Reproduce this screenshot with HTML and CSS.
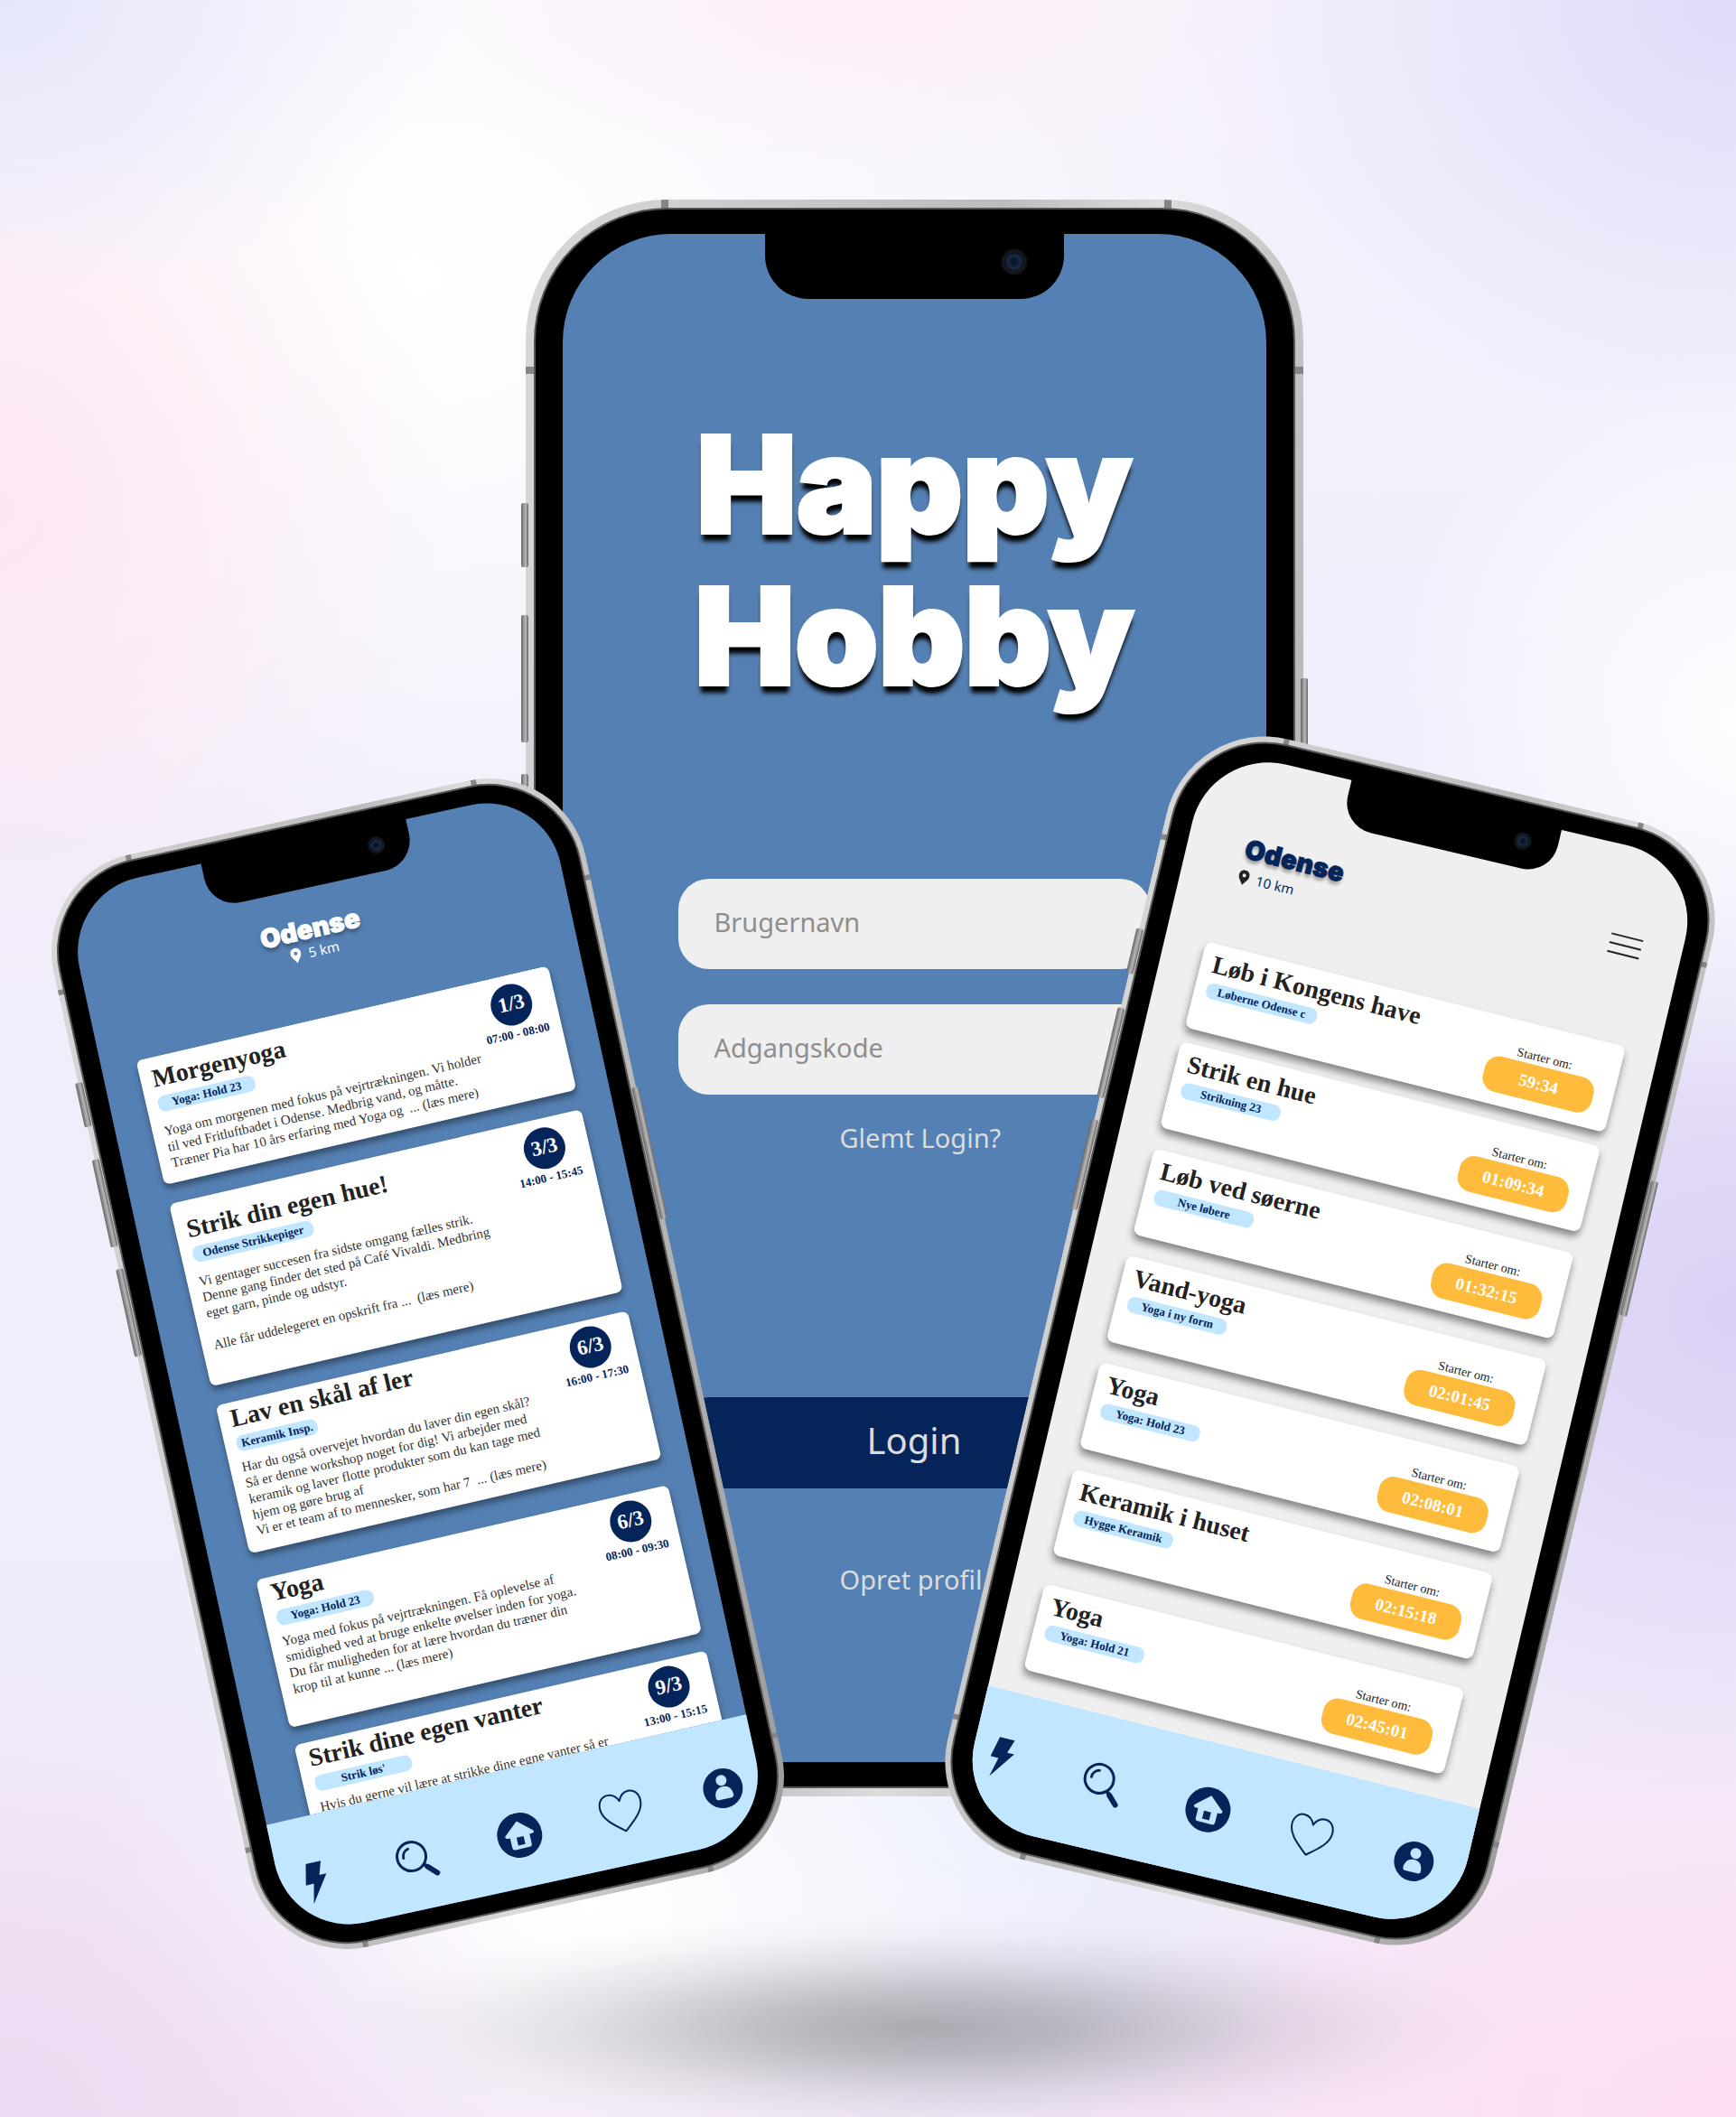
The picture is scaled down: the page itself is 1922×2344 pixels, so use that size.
FILE: index.html
```html
<!DOCTYPE html>
<html lang="da">
<head>
<meta charset="utf-8">
<meta name="viewport" content="width=device-width, initial-scale=1">
<title>Happy Hobby</title>
<link rel="stylesheet" href="styles.css">
</head>
<body>
<svg class="sprite" aria-hidden="true">
  <symbol id="bolt" viewBox="0 0 50 50"><path d="M18 3h17l-5 15h8L17 48l5-22h-9z" fill="currentColor"/></symbol>
  <symbol id="search" viewBox="0 0 50 50"><circle cx="18" cy="21" r="16" fill="none" stroke="currentColor" stroke-width="3"/><path d="M9 21a9 9 0 0 1 7-9" fill="none" stroke="currentColor" stroke-width="3" stroke-linecap="round"/><path d="m29 32 4 4" stroke="currentColor" stroke-width="4"/><path d="m33 36 9 9" stroke="currentColor" stroke-width="6" stroke-linecap="round"/></symbol>
  <symbol id="home" viewBox="0 0 50 50"><circle cx="25" cy="25" r="25" fill="currentColor"/><path d="M25 9 9 23q-1 3 3 3h2v11q0 3 3 3h16q3 0 3-3V26h2q4 0 3-3z" fill="#c1e6ff"/><path d="M21 27h8v9h-8z" fill="currentColor"/></symbol>
  <symbol id="heart" viewBox="0 0 50 50"><path d="M25 47C14 38 2 29 2 17 2 9 7 4 13 4c6 0 10 4 12 9 2-5 6-9 12-9 6 0 11 5 11 13 0 12-12 21-23 30z" fill="none" stroke="currentColor" stroke-width="2" stroke-linejoin="round"/></symbol>
  <symbol id="user" viewBox="0 0 50 50"><circle cx="25" cy="25" r="22" fill="currentColor"/><circle cx="25" cy="16" r="6" fill="#c1e6ff"/><path d="M15 34c0-7 4-11 10-11s10 4 10 11q0 3-3 3H18q-3 0-3-3z" fill="#c1e6ff"/></symbol>
  <symbol id="pin" viewBox="0 0 12 17"><path d="M6 0a6 6 0 0 0-6 6c0 4 4 7 6 11 2-4 6-7 6-11a6 6 0 0 0-6-6zm0 4a2 2 0 1 1 0 4 2 2 0 0 1 0-4z" fill="currentColor" fill-rule="evenodd"/></symbol>
</svg>

<main class="mockup">
  <div class="floor"></div>

  <section class="phone phone-main" aria-label="Login">
    <i class="key key-1"></i><i class="key key-2"></i><i class="key key-3"></i><i class="key key-power"></i>
    <div class="frame"><div class="bezel"><div class="screen">
      <form class="login">
        <h1 class="brand">Happy<br>Hobby</h1>
        <input class="field" type="text" placeholder="Brugernavn" aria-label="Brugernavn">
        <input class="field" type="password" placeholder="Adgangskode" aria-label="Adgangskode">
        <a class="link" href="#glemt">Glemt Login?</a>
        <button class="submit" type="button">Login</button>
        <a class="link" href="#opret">Opret profil</a>
      </form>
    </div></div></div>
    <div class="notch"><i class="camera"></i></div>
  </section>

  <section class="phone phone-left" aria-label="Aktiviteter">
    <i class="key key-1"></i><i class="key key-2"></i><i class="key key-3"></i><i class="key key-power"></i>
    <div class="frame"><div class="bezel"><div class="screen">
      <div class="view">
        <header class="place">
          <h2 class="city">Odense</h2>
          <p class="distance"><svg class="pin"><use href="#pin"/></svg>5 km</p>
        </header>
        <div class="events">
          <article class="event event-mid">
            <div><h3 class="title">Morgenyoga</h3><span class="tag">Yoga: Hold 23</span>
            <p class="text">Yoga om morgenen med fokus på vejrtrækningen. Vi holder<br>til ved Fritluftbadet i Odense. Medbrig vand, og måtte.<br>Træner Pia har 10 års erfaring med Yoga og &nbsp;... (læs mere)</p></div>
            <div class="when"><b class="date">1/3</b><span>07:00 - 08:00</span></div>
          </article>
          <article class="event event-tall">
            <div><h3 class="title">Strik din egen hue!</h3><span class="tag">Odense Strikkepiger</span>
            <p class="text">Vi gentager succesen fra sidste omgang fælles strik.<br>Denne gang finder det sted på Café Vivaldi. Medbring<br>eget garn, pinde og udstyr.<br><br>Alle får uddelegeret en opskrift fra ... &nbsp;(læs mere)</p></div>
            <div class="when"><b class="date">3/3</b><span>14:00 - 15:45</span></div>
          </article>
          <article class="event">
            <div><h3 class="title">Lav en skål af ler</h3><span class="tag tag-short">Keramik Insp.</span>
            <p class="text">Har du også overvejet hvordan du laver din egen skål?<br>Så er denne workshop noget for dig! Vi arbejder med<br>keramik og laver flotte produkter som du kan tage med<br>hjem og gøre brug af<br>Vi er et team af to mennesker, som har 7 &nbsp;... (læs mere)</p></div>
            <div class="when"><b class="date">6/3</b><span>16:00 - 17:30</span></div>
          </article>
          <article class="event event-spaced">
            <div><h3 class="title">Yoga</h3><span class="tag">Yoga: Hold 23</span>
            <p class="text">Yoga med fokus på vejrtrækningen. Få oplevelse af<br>smidighed ved at bruge enkelte øvelser inden for yoga.<br>Du får muligheden for at lære hvordan du træner din<br>krop til at kunne ... (læs mere)</p></div>
            <div class="when"><b class="date">6/3</b><span>08:00 - 09:30</span></div>
          </article>
          <article class="event">
            <div><h3 class="title">Strik dine egen vanter</h3><span class="tag">Strik løs'</span>
            <p class="text">Hvis du gerne vil lære at strikke dine egne vanter så er</p></div>
            <div class="when"><b class="date">9/3</b><span>13:00 - 15:15</span></div>
          </article>
        </div>
        <nav class="tabs" aria-label="Menu">
          <button type="button" aria-label="Nu"><svg><use href="#bolt"/></svg></button>
          <button type="button" aria-label="Søg"><svg><use href="#search"/></svg></button>
          <button type="button" aria-label="Hjem"><svg><use href="#home"/></svg></button>
          <button type="button" aria-label="Favoritter"><svg><use href="#heart"/></svg></button>
          <button type="button" aria-label="Profil"><svg><use href="#user"/></svg></button>
        </nav>
      </div>
    </div></div></div>
    <div class="notch"><i class="camera"></i></div>
  </section>

  <section class="phone phone-right" aria-label="Starter snart">
    <i class="key key-1"></i><i class="key key-2"></i><i class="key key-3"></i><i class="key key-power"></i>
    <div class="frame"><div class="bezel"><div class="screen">
      <div class="view">
        <header class="topbar">
          <div>
            <h2 class="city">Odense</h2>
            <p class="distance"><svg class="pin"><use href="#pin"/></svg>10 km</p>
          </div>
          <button class="burger" type="button" aria-label="Åbn menu"><i></i><i></i><i></i></button>
        </header>
        <div class="soon">
          <article class="slot slot-first"><div><h3 class="title">Løb i Kongens have</h3><span class="tag tag-long">Løberne Odense c</span></div><div class="start"><span>Starter om:</span><b class="timer">59:34</b></div></article>
          <article class="slot"><div><h3 class="title">Strik en hue</h3><span class="tag">Strikning 23</span></div><div class="start"><span>Starter om:</span><b class="timer">01:09:34</b></div></article>
          <article class="slot"><div><h3 class="title">Løb ved søerne</h3><span class="tag">Nye løbere</span></div><div class="start"><span>Starter om:</span><b class="timer">01:32:15</b></div></article>
          <article class="slot"><div><h3 class="title">Vand-yoga</h3><span class="tag">Yoga i ny form</span></div><div class="start"><span>Starter om:</span><b class="timer">02:01:45</b></div></article>
          <article class="slot"><div><h3 class="title">Yoga</h3><span class="tag">Yoga: Hold 23</span></div><div class="start"><span>Starter om:</span><b class="timer">02:08:01</b></div></article>
          <article class="slot slot-spaced"><div><h3 class="title">Keramik i huset</h3><span class="tag">Hygge Keramik</span></div><div class="start"><span>Starter om:</span><b class="timer">02:15:18</b></div></article>
          <article class="slot"><div><h3 class="title">Yoga</h3><span class="tag">Yoga: Hold 21</span></div><div class="start"><span>Starter om:</span><b class="timer">02:45:01</b></div></article>
        </div>
        <nav class="tabs" aria-label="Menu">
          <button type="button" aria-label="Nu"><svg><use href="#bolt"/></svg></button>
          <button type="button" aria-label="Søg"><svg><use href="#search"/></svg></button>
          <button type="button" aria-label="Hjem"><svg><use href="#home"/></svg></button>
          <button type="button" aria-label="Favoritter"><svg><use href="#heart"/></svg></button>
          <button type="button" aria-label="Profil"><svg><use href="#user"/></svg></button>
        </nav>
      </div>
    </div></div></div>
    <div class="notch"><i class="camera"></i></div>
  </section>
</main>
</body>
</html>
```
FILE: styles.css
```css
* { box-sizing: border-box; }

:root {
  --blue: #5580b3;
  --navy: #04245a;
  --sky: #c1e6ff;
  --grey: #efefef;
  --orange: #ffbb3b;
  --sans: "Noto Sans", "Open Sans", sans-serif;
  --serif: "Liberation Serif", serif;
  --heavy: Inter, "Open Sans", sans-serif;
}

body { margin: 0; font-family: var(--sans); }
h1, h2, h3, p { margin: 0; }
button { border: 0; padding: 0; background: none; font: inherit; color: inherit; }
.sprite { position: absolute; width: 0; height: 0; }

.mockup {
  position: relative;
  display: grid;
  justify-content: center;
  padding: 221px 0 355px 102px;
  overflow: hidden;
  background:
    radial-gradient(ellipse 26% 14% at 0% 0%, #e4e6fa, transparent),
    radial-gradient(ellipse 30% 20% at 100% 0%, #dfdbf9, transparent),
    radial-gradient(ellipse 24% 8% at 50% 0%, #fdeef7, transparent),
    radial-gradient(ellipse 26% 26% at 0% 24%, #fde7f3, transparent),
    radial-gradient(ellipse 20% 18% at 100% 34%, #fdfdff, transparent),
    radial-gradient(ellipse 34% 24% at 100% 62%, #dccff5, transparent),
    radial-gradient(ellipse 42% 22% at 100% 100%, #fddff1, transparent),
    radial-gradient(ellipse 30% 22% at 0% 100%, #ecd9f2, transparent),
    radial-gradient(ellipse 30% 14% at 34% 90%, #fff, transparent),
    radial-gradient(ellipse 30% 16% at 58% 86%, #eaeffc, transparent),
    radial-gradient(ellipse 50% 30% at 24% 13%, #fff, transparent),
    linear-gradient(#f6f1fb, #f0eefb 40%, #f2ecfa 85%, #f3e6f6);
}

/* soft shadow under the floating devices */
.floor {
  position: absolute;
  left: calc(50% - 590px);
  bottom: -25px;
  width: 1300px;
  height: 248px;
  background: radial-gradient(closest-side, rgba(106, 105, 110, .52), rgba(120, 120, 126, .44) 26%, rgba(130, 130, 138, .18) 60%, rgba(140, 140, 146, .05) 82%, transparent);
}

/* device shell */
.phone { position: relative; width: var(--w); height: var(--h); }
.frame {
  height: 100%;
  padding: var(--rim);
  border-radius: var(--r-frame);
  background:
    linear-gradient(#858585, #858585) var(--mark-x) 0 / var(--mark) 100% no-repeat,
    linear-gradient(#858585, #858585) calc(100% - var(--mark-x) + 4px) 0 / var(--mark) 100% no-repeat,
    linear-gradient(#858585, #858585) 0 var(--mark-y) / 100% var(--mark) no-repeat,
    linear-gradient(#858585, #858585) 0 calc(100% - var(--mark-y)) / 100% var(--mark) no-repeat,
    linear-gradient(100deg, #d8d8d8, #bcbcbc 45%, #dcdcdc 60%, #9a9a9a);
}
.bezel {
  height: 100%;
  padding: var(--pad);
  border: 2px solid #555;
  border-radius: var(--r-bezel);
  background: #000;
}
.screen {
  display: grid;
  height: 100%;
  overflow: hidden;
  border-radius: var(--r-screen);
  background: var(--blue);
}
.notch {
  position: absolute;
  top: var(--notch-top);
  left: var(--notch-x);
  width: var(--notch-w);
  height: var(--notch-h);
  border-radius: 0 0 var(--notch-r) var(--notch-r);
  background: #000;
}
.camera {
  position: absolute;
  top: 24%;
  right: 12%;
  width: var(--cam);
  height: var(--cam);
  border-radius: 50%;
  background: radial-gradient(circle, #0c1626 16%, #1a2d4c 34%, #10151e 46%, #16191e 58%, #050505 72%);
}
.key {
  position: absolute;
  left: var(--key-out);
  width: 8px;
  border-radius: 2px;
  background: linear-gradient(90deg, #666, #b8b8b8 60%, #666);
}
.key-1 { top: 19%; height: 4%; }
.key-2 { top: 26%; height: 8%; }
.key-3 { top: 36%; height: 8%; }
.key-power { left: auto; right: var(--key-out); top: 30%; height: 12%; }

.phone-main {
  --w: 861px; --h: 1768px; --rim: 9px; --pad: 27px 30px;
  --r-frame: 156px; --r-bezel: 148px; --r-screen: 120px;
  --mark: 8px; --mark-x: 150px; --mark-y: 185px; --key-out: -5px;
  --notch-top: 36px; --notch-x: 265px; --notch-w: 331px; --notch-h: 74px; --notch-r: 48px; --cam: 30px;
}
.phone-left, .phone-right { position: absolute; }
.phone-left {
  --w: 603px; --h: 1238px; --rim: 6px; --pad: 19px 21px;
  --r-frame: 110px; --r-bezel: 104px; --r-screen: 84px;
  --mark: 6px; --mark-x: 105px; --mark-y: 130px; --key-out: -3px;
  --notch-top: 26px; --notch-x: 185px; --notch-w: 232px; --notch-h: 52px; --notch-r: 34px; --cam: 20px;
  left: calc(50% - 800px);
  top: 891px;
  transform: rotate(-12.3deg);
}
.phone-right {
  --w: 621px; --h: 1275px; --rim: 6px; --pad: 20px 22px;
  --r-frame: 112px; --r-bezel: 106px; --r-screen: 86px;
  --mark: 6px; --mark-x: 108px; --mark-y: 134px; --key-out: -3px;
  --notch-top: 27px; --notch-x: 191px; --notch-w: 239px; --notch-h: 53px; --notch-r: 34px; --cam: 20px;
  left: calc(50% + 201px);
  top: 847px;
  transform: rotate(13.3deg);
}
.phone-right .screen { background: var(--grey); }

/* login screen */
.login { display: flex; flex-direction: column; align-items: center; padding: 194px 120px 0; }
.brand {
  margin-bottom: 184px;
  font: 900 148px/168px var(--heavy);
  color: #fff;
  text-align: center;
  -webkit-text-stroke: 4px #fff;
  stroke-linejoin: round;
  text-shadow: 0 9px 5px #000;
}
.field {
  width: 523px;
  height: 100px;
  padding: 0 40px 6px;
  border: 0;
  border-radius: 34px;
  background: var(--grey);
  font: 29px/40px var(--sans);
}
.field + .field { margin-top: 39px; }
.field::placeholder { color: #8e8e8e; opacity: 1; }
.link { align-self: flex-start; margin: 28px 0 0 187px; font-size: 29px; line-height: 40px; color: #dcdcdc; text-decoration: none; }
.submit { width: 523px; height: 101px; margin: 267px 0 53px; padding-bottom: 6px; border-radius: 34px; background: var(--navy); font-size: 40px; color: #dcdcdc; }

/* app screens */
.view { display: flex; flex-direction: column; margin: -8px; min-height: 0; font-family: var(--serif); white-space: nowrap; }
.phone-left .view { transform: rotate(-.7deg); }
.phone-right .view { transform: rotate(.8deg); }

.city { font: 900 29px/30px var(--heavy); color: #fff; -webkit-text-stroke: 1px currentColor; text-shadow: 0 4px 4px rgba(0, 0, 0, .35); }
.distance { display: flex; align-items: center; gap: 8px; font: 15px/20px var(--sans); color: #fff; }
.pin { width: 12px; height: 17px; }
.place { display: flex; flex-direction: column; align-items: center; padding: 89px 16px 0 0; }
.place .distance { margin-bottom: 64px; }

.title { font-size: 28px; line-height: 28px; color: #222; }
.tag {
  display: block;
  width: 110px;
  margin-top: 6px;
  border-radius: 8px;
  background: var(--sky);
  font-size: 13px;
  font-weight: 700;
  line-height: 18px;
  color: var(--navy);
  text-align: center;
}

.events { flex: 1; min-height: 0; overflow: hidden; padding: 0 41px 0 52px; }
.event {
  display: flex;
  justify-content: space-between;
  height: 168px;
  margin-bottom: 22px;
  padding: 4px 11px 0 13px;
  border-radius: 7px;
  background: #fff;
  box-shadow: 0 5px 7px rgba(0, 0, 0, .4);
}
.event-mid { height: 141px; padding-top: 10px; }
.event-tall { height: 207px; padding-top: 18px; }
.event:nth-child(3) { margin-bottom: 30px; }
.event-spaced { margin-bottom: 20px; }
.event-tall .tag { width: 137px; }
.event .tag-short { width: 92px; }
.text { margin-top: 8px; font-size: 15px; line-height: 18px; color: #333; }
.event-mid .text, .event-tall .text { margin-top: 12px; }
.when { display: flex; flex-direction: column; align-items: center; width: 76px; font-size: 13px; font-weight: 700; line-height: 16px; color: var(--navy); }
.date { width: 46px; height: 46px; margin: 3px 0 2px; border-radius: 50%; background: var(--navy); font-size: 23px; line-height: 44px; text-align: center; color: #fff; }
.event-mid .date { margin-top: 0; }
.event-tall .date { margin-top: -8px; }

.tabs { flex: none; display: flex; justify-content: space-between; align-items: center; height: 140px; padding: 8px 32px 0 17px; background: var(--sky); color: var(--navy); }
.tabs button { height: 50px; }
.tabs svg { display: block; width: 50px; height: 50px; }
.phone-right .tabs { height: 155px; padding: 0 33px 8px 23px; }

.topbar { display: flex; justify-content: space-between; align-items: flex-start; padding: 97px 60px 69px 65px; }
.topbar .city { color: var(--navy); }
.topbar .distance { margin-top: 6px; color: var(--navy); }
.topbar .pin { color: #222; }
.burger { display: grid; gap: 8px; width: 36px; margin-top: 6px; }
.burger i { height: 2px; background: #222; }

.soon { flex: 1; min-height: 0; padding: 0 50px 0 48px; }
.slot {
  display: flex;
  justify-content: space-between;
  height: 98px;
  margin-bottom: 24px;
  padding: 9px 22px 0 13px;
  border-radius: 8px;
  background: #fff;
  box-shadow: 0 6px 8px rgba(0, 0, 0, .45);
}
.slot-first { margin-bottom: 16px; }
.slot-spaced { margin-bottom: 33px; }
.slot .tag { width: 113px; }
.slot .tag-long { width: 126px; }
.start { display: flex; flex-direction: column; align-items: center; margin-top: 17px; font-size: 14px; line-height: 18px; color: #222; }
.timer { width: 124px; height: 40px; border-radius: 16px; background: var(--orange); font-size: 19px; line-height: 39px; text-align: center; color: #fff; }
```
